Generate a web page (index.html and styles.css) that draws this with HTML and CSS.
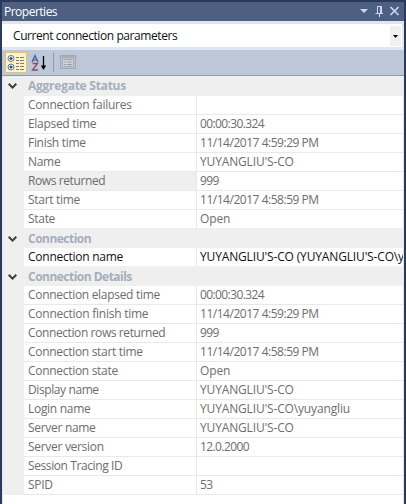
FILE: index.html
```
<!DOCTYPE html>
<html lang="en">
<head>
<meta charset="utf-8">
<title>Properties</title>
<link rel="stylesheet" href="styles.css">
</head>
<body>
<div class="window">
  <header class="titlebar">
    <span class="title">Properties</span>
    <svg class="controls" width="42" height="19" viewBox="0 0 42 19">
      <path d="M1 7h8L5 11z" fill="#ced8ea"/>
      <path d="M18 4.500h5M18.500 4v7M22 4v7M16.500 11.500h7.500M20.500 12v3" fill="none" stroke="#ced8ea"/>
      <path d="M22 4v7" stroke="#ced8ea" stroke-width="2"/>
      <path d="M31.500 5l8 8M39.500 5l-8 8" stroke="#ced8ea" stroke-width="1.700"/>
    </svg>
  </header>
  <div class="selector">
    <span class="current">Current connection parameters</span>
    <span class="drop"><svg width="5" height="3" viewBox="0 0 5 3"><path d="M0 0h5L2.500 3z"/></svg></span>
  </div>
  <div class="toolbar">
    <span class="tool active">
      <svg width="20" height="18" viewBox="0 0 20 18">
        <g fill="#fff" stroke="#68727e"><circle cx="5" cy="4.500" r="3"/><circle cx="5" cy="13" r="3"/></g>
        <path d="M3.500 4.500h3M5 3v3M3.500 13h3M5 11.500v3" stroke="#123d86" stroke-width="1.300"/>
        <path d="M10 3.500h3M14 3.500h4M10 6.500h3M14 6.500h4M10 9.500h3M14 9.500h4M10 12.500h3M14 12.500h4M10 15.500h3M14 15.500h4" stroke="#7c7b72"/>
      </svg>
    </span>
    <svg class="sort" width="17" height="18" viewBox="0 0 17 18">
      <path d="M1 8L4 1.500 7 8M2.200 5.800h3.600" fill="none" stroke="#3c60a8" stroke-width="1.300"/>
      <path d="M1.500 9.500h5L1.500 16h5.500" fill="none" stroke="#944d5c" stroke-width="1.400"/>
      <path d="M12.500 2v12" stroke="#000" stroke-width="1.300"/>
      <path d="M9.800 11.500h5.400L12.500 16z"/>
    </svg>
    <span class="divider"></span>
    <svg class="pages" width="16" height="15" viewBox="0 0 16 15">
      <rect x=".5" y=".5" width="15" height="13" fill="#bdc3cc" stroke="#a2a8b2"/>
      <path d="M1 2h14" stroke="#a9afb8" stroke-width="2"/>
      <rect x="2.500" y="4.500" width="11" height="7" rx="1" fill="#d1d5da" stroke="#a0a6b0"/>
      <path d="M4 7h2M7 7h5M4 9.500h2M7 9.500h5" stroke="#979da8"/>
    </svg>
  </div>
  <main class="grid">
    <div class="category first"><svg class="chevron" width="9" height="6" viewBox="0 0 9 6"><path d="M.7.800L4.500 4.600 8.300.800"/></svg><span class="heading wide">Aggregate Status</span></div>
    <div class="row"><span class="name wide">Connection failures</span><span class="value"></span></div>
    <div class="row"><span class="name">Elapsed time</span><span class="value num">00:00:30.324</span></div>
    <div class="row"><span class="name">Finish time</span><span class="value date">11/14/2017 4:59:29 PM</span></div>
    <div class="row"><span class="name">Name</span><span class="value">YUYANGLIU'S-CO</span></div>
    <div class="row selected"><span class="name tight">Rows returned</span><span class="value num">999</span></div>
    <div class="row"><span class="name">Start time</span><span class="value date">11/14/2017 4:58:59 PM</span></div>
    <div class="row last"><span class="name">State</span><span class="value">Open</span></div>
    <div class="category"><svg class="chevron" width="9" height="6" viewBox="0 0 9 6"><path d="M.7.800L4.500 4.600 8.300.800"/></svg><span class="heading">Connection</span></div>
    <div class="row editable last"><span class="name wide">Connection name</span><span class="value">YUYANGLIU'S-CO (YUYANGLIU'S-CO\yuyangliu)</span></div>
    <div class="category"><svg class="chevron" width="9" height="6" viewBox="0 0 9 6"><path d="M.7.800L4.500 4.600 8.300.800"/></svg><span class="heading">Connection Details</span></div>
    <div class="row"><span class="name">Connection elapsed time</span><span class="value num">00:00:30.324</span></div>
    <div class="row"><span class="name wide">Connection finish time</span><span class="value date">11/14/2017 4:59:29 PM</span></div>
    <div class="row"><span class="name tight">Connection rows returned</span><span class="value num">999</span></div>
    <div class="row"><span class="name">Connection start time</span><span class="value date">11/14/2017 4:58:59 PM</span></div>
    <div class="row"><span class="name">Connection state</span><span class="value">Open</span></div>
    <div class="row"><span class="name tight">Display name</span><span class="value">YUYANGLIU'S-CO</span></div>
    <div class="row"><span class="name">Login name</span><span class="value">YUYANGLIU'S-CO\yuyangliu</span></div>
    <div class="row"><span class="name">Server name</span><span class="value">YUYANGLIU'S-CO</span></div>
    <div class="row"><span class="name">Server version</span><span class="value num">12.0.2000</span></div>
    <div class="row"><span class="name tight">Session Tracing ID</span><span class="value"></span></div>
    <div class="row"><span class="name">SPID</span><span class="value num">53</span></div>
  </main>
</div>
</body>
</html>
```

FILE: styles.css
```
* { box-sizing: border-box; }
body {
  margin: 0;
  background: #2b3a5b;
  font: 12px/18px "Open Sans", "Noto Sans", sans-serif;
  letter-spacing: -0.3px;
  color: #6d6d6d;
}
.window {
  width: 406px;
  height: 504px;
  padding: 2px 2px 0;
  display: flex;
  flex-direction: column;
  overflow: hidden;
}
.titlebar {
  height: 19px;
  display: flex;
  justify-content: space-between;
  padding: 0 3px 0 2px;
  background: #4d6082;
  color: #fff;
}
.title {
  line-height: 20px;
  letter-spacing: -0.5px;
}
.selector {
  height: 29px;
  padding: 3px 2px 3px 0;
  display: flex;
  background: #dfe6f1;
  color: #111;
}
.current {
  flex: 1;
  padding-left: 11px;
  line-height: 24px;
  letter-spacing: -0.42px;
  background: #fff;
}
.drop {
  width: 13px;
  display: flex;
  align-items: center;
  justify-content: center;
  background: #f0f0f0;
  border: solid #fff;
  border-width: 2px 1px 1px;
}
.toolbar {
  height: 26px;
  display: flex;
  align-items: flex-start;
  padding: 2px 0 0 3px;
  background: #bcc7d8;
  border-bottom: 1px solid #8f9bae;
}
.tool {
  width: 22px;
  height: 21px;
  padding: 1px 0;
}
.active {
  background: #fff3c8;
  border: 1px solid #e5c365;
}
.sort { margin: 2px 0 0 4px; }
.divider {
  width: 1px;
  height: 19px;
  margin: 1px 6px 0 5px;
  background: #8c9ab0;
}
.pages { margin-top: 3px; }
.grid {
  flex: 1;
  background: #fff;
  border: solid #dfe6f1;
  border-width: 0 1px;
}
.category {
  height: 19px;
  display: flex;
  align-items: center;
  padding-left: 5px;
  background: #efefef;
}
.first { height: 20px; }
.heading {
  margin-left: 11px;
  font-weight: 700;
  letter-spacing: -0.52px;
  color: #a5aebb;
}
.chevron path {
  fill: none;
  stroke: #3d3d3d;
  stroke-width: 2;
}
.row {
  height: 19px;
  display: flex;
  padding-left: 21px;
  background: linear-gradient(90deg, #efefef 21px, #fff 21px);
}
.name, .value {
  border-bottom: 1px solid #e9e9e9;
  white-space: nowrap;
}
.name {
  width: 173px;
  padding-left: 4px;
  border-right: 1px solid #e9e9e9;
}
.value {
  flex: 1;
  min-width: 0;
  padding-left: 3px;
  overflow: hidden;
  letter-spacing: -0.15px;
}
.wide { letter-spacing: -0.25px; }
.tight { letter-spacing: -0.4px; }
.num { letter-spacing: -0.6px; }
.date { letter-spacing: -0.47px; }
.selected .name { background: #efefef; }
.editable { color: #111; }
.last .name, .last .value { border-bottom-color: #efefef; }
```
